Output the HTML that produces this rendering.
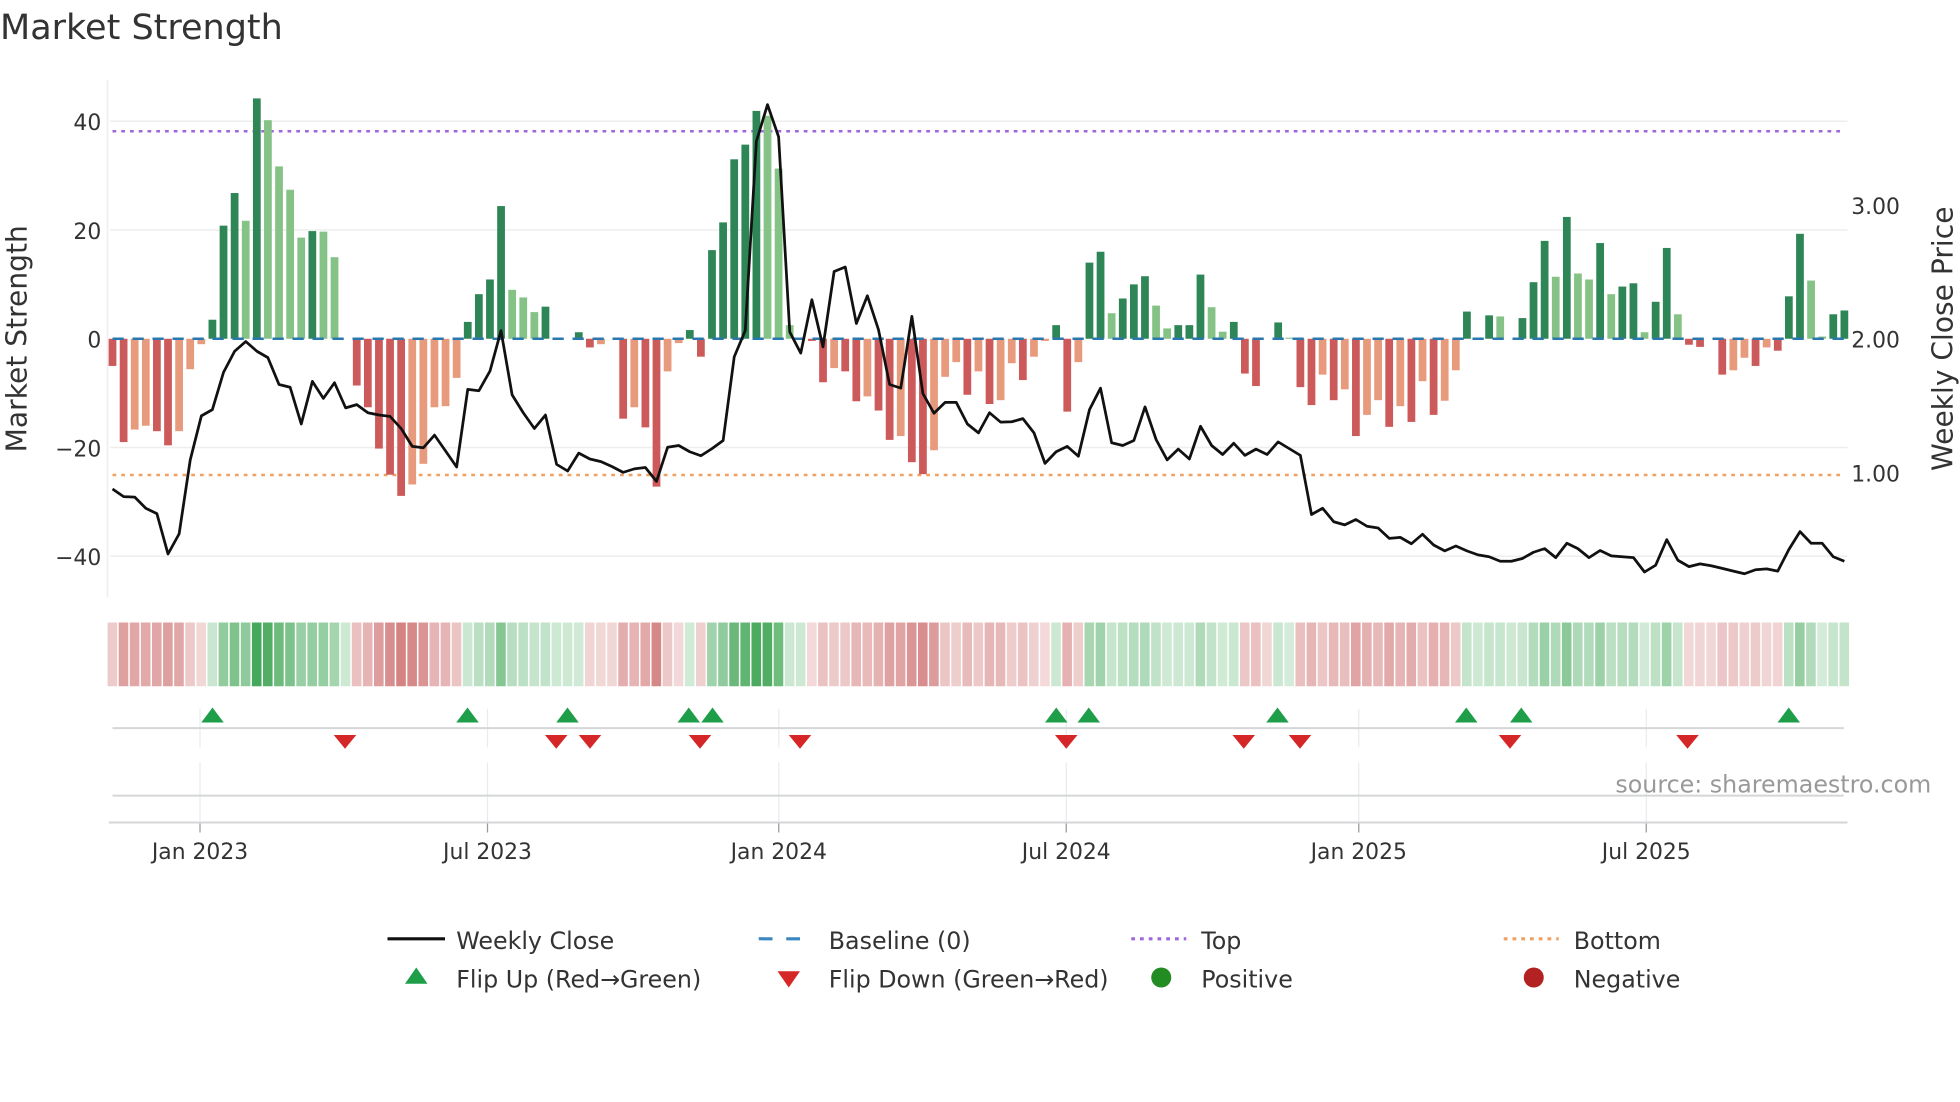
<!DOCTYPE html>
<html><head><meta charset="utf-8">
<style>
html,body{margin:0;padding:0;background:#fff;}
svg{display:block;}
text{font-family:"DejaVu Sans","Liberation Sans",sans-serif;fill:#333;}
</style></head>
<body>
<svg id="s" width="1960" height="1102" viewBox="0 0 1568 881.6" xmlns="http://www.w3.org/2000/svg">
<text x="0" y="31" font-size="28" fill="#333">Market Strength</text>
<g id="grid"></g>
<g id="bars"></g>
<g id="heat"></g>
<g id="marks"></g>
<g font-size="17.5" text-anchor="end">
<text x="81" y="104">40</text>
<text x="81" y="191">20</text>
<text x="81" y="278">0</text>
<text x="81" y="365">−20</text>
<text x="81" y="452">−40</text>
</g>
<g font-size="17.5">
<text x="1481" y="171">3.00</text>
<text x="1481" y="278">2.00</text>
<text x="1481" y="385">1.00</text>
</g>
<text transform="translate(21,271) rotate(-90)" font-size="22.5" text-anchor="middle">Market Strength</text>
<text transform="translate(1562,271) rotate(-90)" font-size="22.5" text-anchor="middle">Weekly Close Price</text>
<g font-size="17.5" text-anchor="middle">
<text x="160" y="687">Jan 2023</text>
<text x="390" y="687">Jul 2023</text>
<text x="623" y="687">Jan 2024</text>
<text x="853" y="687">Jul 2024</text>
<text x="1087" y="687">Jan 2025</text>
<text x="1317" y="687">Jul 2025</text>
</g>
<text x="1545" y="634" font-size="19" text-anchor="end" style="fill:#999">source: sharemaestro.com</text>
<g font-size="19">
<line x1="310" y1="751" x2="356" y2="751" stroke="#111" stroke-width="2.5"/>
<text x="365" y="759">Weekly Close</text>
<line x1="607" y1="751" x2="651" y2="751" stroke="#3a86c0" stroke-width="2.5" stroke-dasharray="11,11"/>
<text x="663" y="759">Baseline (0)</text>
<line x1="905" y1="751" x2="949" y2="751" stroke="#a066dd" stroke-width="2.5" stroke-dasharray="3,4"/>
<text x="961" y="759">Top</text>
<line x1="1203" y1="751" x2="1247" y2="751" stroke="#f0a060" stroke-width="2.5" stroke-dasharray="3,4"/>
<text x="1259" y="759">Bottom</text>
<polygon points="324,787 342,787 333,774" fill="#1f9e4a"/>
<text x="365" y="790">Flip Up (Red→Green)</text>
<polygon points="622,777 640,777 631,790" fill="#d62728"/>
<text x="663" y="790">Flip Down (Green→Red)</text>
<circle cx="929" cy="782" r="8" fill="#228b22"/>
<text x="961" y="790">Positive</text>
<circle cx="1227" cy="782" r="8" fill="#b22222"/>
<text x="1259" y="790">Negative</text>
</g>
</svg>
<script>
var NS="http://www.w3.org/2000/svg";
function el(p,t,a){var e=document.createElementNS(NS,t);for(var k in a)e.setAttribute(k,a[k]);p.appendChild(e);return e;}
var V=[-5,-19,-16.7,-16,-17,-19.6,-17,-5.6,-1,3.5,20.8,26.8,21.7,44.2,40.2,31.7,27.4,18.6,19.8,19.7,15,0,-8.6,-12.6,-20.2,-25,-28.9,-26.8,-23,-12.6,-12.4,-7.2,3.1,8.2,10.9,24.4,9,7.6,4.9,5.9,0,0,1.2,-1.6,-1,0,-14.7,-12.6,-16.3,-27.2,-6,-0.8,1.6,-3.3,16.3,21.4,33,35.7,41.9,41,31.3,2.5,0,-0.4,-8,-5.4,-6,-11.5,-10.6,-13.2,-18.6,-17.9,-22.7,-24.9,-20.5,-7,-4.3,-10.3,-6,-12,-11.3,-4.5,-7.6,-3.3,-0.4,2.5,-13.4,-4.3,14,16,4.7,7.4,10,11.5,6.1,1.9,2.5,2.5,11.8,5.8,1.3,3.1,-6.4,-8.7,0,3,0.2,-8.9,-12.2,-6.6,-11.3,-9.3,-17.9,-14,-11.3,-16.2,-12.4,-15.3,-7.8,-14,-11.4,-5.8,5,0,4.3,4.1,0,3.8,10.4,18,11.4,22.4,12,10.9,17.6,8.2,9.6,10.2,1.2,6.8,16.7,4.5,-1.1,-1.5,0,-6.6,-5.8,-3.5,-5,-1.6,-2.2,7.8,19.3,10.7,0.4,4.5,5.2];
var L=[1095,1112,1113,1138,1150,1240,1195,1030,932,918,835,788,766,788,802,862,868,950,855,893,858,914,907,925,930,933,960,1000,1003,975,1010,1046,873,876,832,742,885,925,960,930,1040,1055,1015,1028,1034,1045,1058,1050,1047,1078,1002,998,1012,1021,1005,987,800,742,320,238,310,745,792,673,778,610,600,726,664,740,862,870,710,882,926,902,902,950,970,925,946,945,938,970,1038,1012,1000,1022,918,870,992,998,987,912,985,1030,1006,1028,955,998,1018,993,1020,1006,1018,990,1005,1020,1152,1138,1168,1175,1163,1178,1182,1205,1203,1217,1196,1220,1233,1222,1233,1242,1246,1256,1256,1250,1236,1228,1248,1216,1228,1248,1232,1244,1246,1248,1280,1265,1208,1254,1268,1262,1266,1272,1278,1284,1275,1273,1278,1230,1190,1216,1216,1246,1256];
var N=V.length,x0=90,dx=(1475.5-90)/(N-1);
var g=document.getElementById('grid'),b=document.getElementById('bars'),h=document.getElementById('heat'),m=document.getElementById('marks');
[97,184,358,445].forEach(function(y){el(g,'line',{x1:88,x2:1478,y1:y,y2:y,stroke:'#eeeeee','stroke-width':1.2});});
el(g,'line',{x1:86,x2:86,y1:64,y2:478,stroke:'#eeeeee','stroke-width':1.2});
[160,390,623,853,1087,1317].forEach(function(x){
 el(g,'line',{x1:x,x2:x,y1:567,y2:598,stroke:'#e8ecef','stroke-width':1});
 el(g,'line',{x1:x,x2:x,y1:610,y2:658,stroke:'#e8ecef','stroke-width':1});
 el(g,'line',{x1:x,x2:x,y1:658,y2:666,stroke:'#999','stroke-width':1});
});
el(g,'line',{x1:90,x2:1475,y1:582.5,y2:582.5,stroke:'#d4d6d8','stroke-width':1.6});
el(g,'line',{x1:90,x2:1475,y1:636.5,y2:636.5,stroke:'#d4d6d8','stroke-width':1.6});
el(g,'line',{x1:87,x2:1478,y1:658,y2:658,stroke:'#d4d6d8','stroke-width':1.6});
el(b,'line',{x1:90,x2:1475,y1:105,y2:105,stroke:'#a066dd','stroke-width':2,'stroke-dasharray':'3,4'});
el(b,'line',{x1:90,x2:1475,y1:380,y2:380,stroke:'#f0a060','stroke-width':2,'stroke-dasharray':'3,4'});
for(var i=0;i<N;i++){
 var v=V[i],x=x0+i*dx,p=i>0?V[i-1]:0,col;
 if(v>0)col=(v>=p)?'#2e8656':'#85c285';else col=(v<=p)?'#cd5a5a':'#e89a7c';
 if(v!=0){var y1=271-v*4.35;el(b,'rect',{x:x-3.1,width:6.2,y:Math.min(y1,271),height:Math.abs(v*4.35),fill:col});}
 var a=Math.min(1,Math.abs(v)/(v>0?44:29)),hc;
 var sgn=v;if(v==0){var j=i;while(j>0&&V[j]==0)j--;sgn=V[j];a=0.05;}
 if(sgn>0){var r=Math.round(212-(212-70)*a),gg=Math.round(236-(236-168)*a),bb=Math.round(218-(218-90)*a);hc='rgb('+r+','+gg+','+bb+')';}
 else{var r2=Math.round(243-(243-212)*a),g2=Math.round(218-(218-130)*a),b2=Math.round(218-(218-130)*a);hc='rgb('+r2+','+g2+','+b2+')';}
 el(h,'rect',{x:x-dx/2+0.5,width:dx-1.2,y:498,height:51,fill:hc});
}
el(b,'line',{x1:90,x2:1476,y1:271,y2:271,stroke:'#2a77b0','stroke-width':2,'stroke-dasharray':'9,7'});
var pts=[];for(var i=0;i<N;i++){pts.push((x0+i*dx).toFixed(1)+','+(271+(L[i]-760)*0.3588).toFixed(1));}
el(b,'polyline',{points:pts.join(' '),fill:'none',stroke:'#111','stroke-width':2.2,'stroke-linejoin':'round'});
[170,374,454,551,570,845,871,1022,1173,1217,1431].forEach(function(x){el(m,'polygon',{points:(x-9)+',578 '+(x+9)+',578 '+x+',566',fill:'#1f9e4a'});});
[276,445,472,560,640,853,995,1040,1208,1350].forEach(function(x){el(m,'polygon',{points:(x-9)+',588 '+(x+9)+',588 '+x+',599',fill:'#d62728'});});
</script>
</body></html>
